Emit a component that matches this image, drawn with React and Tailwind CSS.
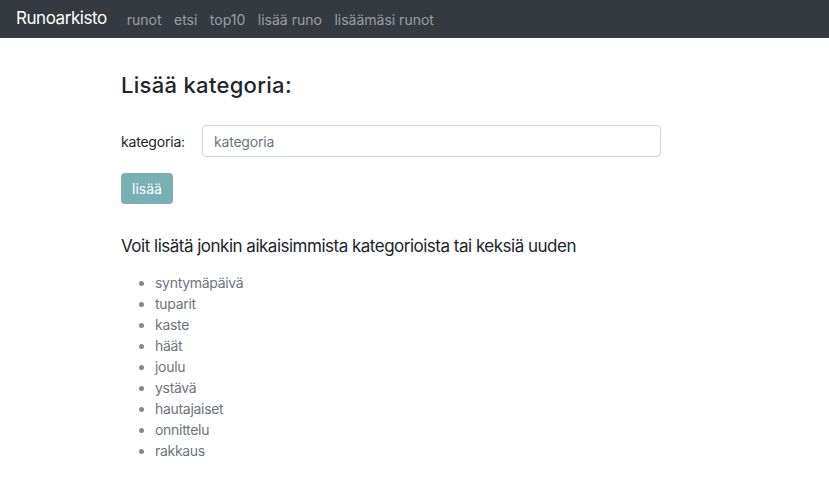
export default function App() {
  const cats = ["syntymäpäivä", "tuparit", "kaste", "häät", "joulu", "ystävä", "hautajaiset", "onnittelu", "rakkaus"];
  return (
    <div className="min-h-[491px] bg-white font-['Inter',sans-serif] text-[#212529]">
      <nav className="flex h-[38px] items-center bg-[#343a40] pl-[16px]">
        <span className="text-[17px] tracking-[-0.45px] text-white">Runoarkisto</span>
        <div className="ml-[20px] flex gap-[12.5px] text-[14px] text-white/50">
          <span>runot</span>
          <span>etsi</span>
          <span>top10</span>
          <span>lisää runo</span>
          <span>lisäämäsi runot</span>
        </div>
      </nav>
      <main className="pl-[121px] pt-[32px]">
        <h2 className="text-[22px] font-medium leading-[30px] tracking-[0.3px]">Lisää kategoria:</h2>
        <div className="mt-[25px] flex items-center">
          <label className="w-[81px] text-[14px] tracking-[-0.2px]">kategoria:</label>
          <input
            placeholder="kategoria"
            className="h-[32px] w-[459px] rounded-[4px] border border-[#ced4da] px-[11px] text-[14px] tracking-[-0.2px] placeholder:text-[#6c757d] outline-none"
          />
        </div>
        <button className="mt-[16px] h-[31px] rounded-[4px] bg-[#78b0b3] px-[11px] text-[14px] text-white">lisää</button>
        <p className="mt-[30px] text-[17px] leading-[24px] tracking-[-0.5px]">Voit lisätä jonkin aikaisimmista kategorioista tai keksiä uuden</p>
        <ul className="mt-[14px] list-disc pl-[34px] text-[14px] leading-[21px] tracking-[-0.3px] text-[#6c757d] marker:text-[#888]">
          {cats.map((c) => (
            <li key={c}>{c}</li>
          ))}
        </ul>
      </main>
    </div>
  );
}
